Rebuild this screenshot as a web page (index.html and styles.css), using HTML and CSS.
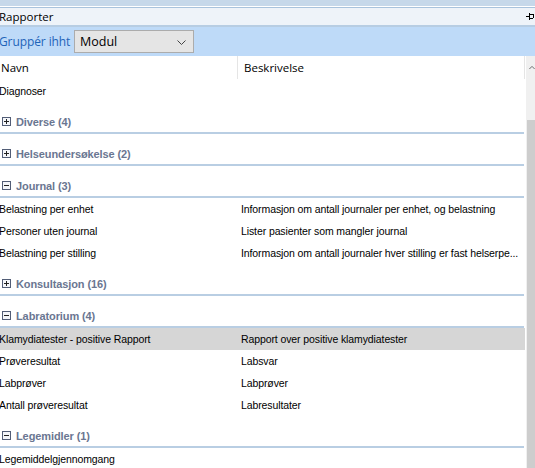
FILE: index.html
```html
<!DOCTYPE html>
<html>
<head>
<meta charset="utf-8">
<link rel="stylesheet" href="styles.css">
</head>
<body>
<div class="window">
  <div class="topstrip"></div>
  <div class="caption">
    <span class="caption-title">Rapporter</span>
    <svg class="pin" width="8" height="9" viewBox="0 0 8 9"><path d="M0 4.5h3M3 1v7M3 2h4M3 6h4M7 2v4" stroke="#000" stroke-width="1" fill="none" shape-rendering="crispEdges"/></svg>
  </div>
  <div class="toolbar">
    <span class="group-label">Gruppér ihht</span>
    <div class="combo">
      <span class="combo-text">Modul</span>
      <svg class="chevron" width="9" height="5" viewBox="0 0 9 5"><path d="M0.5 0.5l4 4 4-4" stroke="#444" stroke-width="1" fill="none"/></svg>
    </div>
  </div>
  <div class="grid">
    <div class="list">
      <div class="header">
        <div class="hcell first">Navn</div>
        <div class="hcell second">Beskrivelse</div>
      </div>
      <div class="row"><div class="c1">Diagnoser</div><div class="c2"></div></div>
      <div class="grp"><span class="box plus"></span><span class="gtext">Diverse (4)</span></div>
      <div class="grp"><span class="box plus"></span><span class="gtext">Helseundersøkelse (2)</span></div>
      <div class="grp"><span class="box minus"></span><span class="gtext">Journal (3)</span></div>
      <div class="row"><div class="c1">Belastning per enhet</div><div class="c2">Informasjon om antall journaler per enhet, og belastning</div></div>
      <div class="row"><div class="c1">Personer uten journal</div><div class="c2">Lister pasienter som mangler journal</div></div>
      <div class="row"><div class="c1">Belastning per stilling</div><div class="c2">Informasjon om antall journaler hver stilling er fast helserpe...</div></div>
      <div class="grp"><span class="box plus"></span><span class="gtext">Konsultasjon (16)</span></div>
      <div class="grp"><span class="box minus"></span><span class="gtext">Labratorium (4)</span></div>
      <div class="row selected"><div class="c1">Klamydiatester - positive Rapport</div><div class="c2">Rapport over positive klamydiatester</div></div>
      <div class="row"><div class="c1">Prøveresultat</div><div class="c2">Labsvar</div></div>
      <div class="row"><div class="c1">Labprøver</div><div class="c2">Labprøver</div></div>
      <div class="row"><div class="c1">Antall prøveresultat</div><div class="c2">Labresultater</div></div>
      <div class="grp"><span class="box minus"></span><span class="gtext">Legemidler (1)</span></div>
      <div class="row"><div class="c1">Legemiddelgjennomgang</div><div class="c2"></div></div>
    </div>
    <div class="scrollbar">
      <div class="arrow">
        <svg width="8" height="5" viewBox="0 0 8 5"><path d="M0.5 4.5l3.5-3.5 3.5 3.5" stroke="#606060" stroke-width="1.2" fill="none"/></svg>
      </div>
      <div class="thumb"></div>
    </div>
  </div>
</div>
</body>
</html>
```

FILE: styles.css
```css
html, body {
  margin: 0;
  padding: 0;
  background: #ffffff;
  overflow: hidden;
}

.window {
  width: 535px;
  height: 468px;
  display: flex;
  flex-direction: column;
  overflow: hidden;
}

.topstrip {
  height: 6px;
  background: #c6d8ea;
  border-bottom: 1px solid #ffffff;
}

.caption {
  height: 17px;
  background: #eef3f9;
  border-top: 1px solid #a9c3dd;
  border-bottom: 2px solid #b7cde3;
  display: flex;
  align-items: center;
  justify-content: space-between;
  font-family: "Open Sans", "Noto Sans", sans-serif;
  font-size: 11.5px;
  color: #000;
}

.caption-title {
  margin-left: -1px;
}

.pin {
  margin-right: 1px;
}

.toolbar {
  height: 29px;
  background: #bedaf8;
  display: flex;
  align-items: center;
  font-family: "Open Sans", "Noto Sans", sans-serif;
}

.group-label {
  color: #1e64b8;
  font-size: 12px;
  letter-spacing: -0.1px;
  margin-left: -1px;
  width: 75px;
  flex: none;
  white-space: nowrap;
}

.combo {
  height: 21px;
  background: #e5e5e5;
  border: 1px solid #acacac;
  display: flex;
  align-items: center;
  justify-content: space-between;
  padding: 0 7px 0 5px;
  box-sizing: content-box;
  width: 106px;
}

.combo-text {
  font-size: 12.5px;
  color: #000;
}

.chevron {
  margin-top: 1px;
}

.grid {
  flex: 1;
  display: flex;
  min-height: 0;
}

.list {
  width: 526px;
  font-family: "Liberation Sans", Arial, sans-serif;
  font-size: 10.5px;
  letter-spacing: -0.1px;
  color: #000;
}

.header {
  height: 24px;
  display: grid;
  grid-template-columns: 238px 287px;
  font-family: "Open Sans", "Noto Sans", sans-serif;
  font-size: 11.5px;
  letter-spacing: 0;
}

.hcell {
  display: flex;
  align-items: center;
  height: 23px;
  border-right: 1px solid #e5e5e5;
}

.hcell.first {
  padding-left: 1px;
}

.hcell.second {
  padding-left: 6px;
}

.row {
  height: 22px;
  display: grid;
  grid-template-columns: 241px 284px;
  align-items: center;
  width: 525px;
}

.row .c1 {
  margin-left: -1px;
  white-space: nowrap;
  overflow: hidden;
}

.row .c2 {
  white-space: nowrap;
}

.row.selected {
  background: #d6d6d6;
}

.grp {
  width: 524px;
  height: 32px;
  border-bottom: 2px solid #b9cee3;
  display: flex;
  align-items: center;
  padding-top: 9px;
  box-sizing: border-box;
}

.box {
  width: 7px;
  height: 7px;
  border: 1px solid #525d76;
  background: #f4f6fa;
  margin-left: 2px;
  margin-right: 5px;
  position: relative;
  flex: none;
}

.box::before {
  content: "";
  position: absolute;
  left: 1px;
  top: 3px;
  width: 5px;
  height: 1px;
  background: #222;
}

.box.plus::after {
  content: "";
  position: absolute;
  left: 3px;
  top: 1px;
  width: 1px;
  height: 5px;
  background: #222;
}

.gtext {
  font-weight: bold;
  color: #6a7691;
  font-size: 11px;
  letter-spacing: -0.1px;
}

.scrollbar {
  width: 9px;
  background: #f0f0f0;
  display: flex;
  flex-direction: column;
  border-left: 1px solid #ffffff;
}

.arrow {
  height: 22px;
  display: flex;
  align-items: center;
  padding-left: 3px;
}

.thumb {
  margin-top: 42px;
  flex: 1;
  background: #cdcdcd;
  margin-left: 1px;
}
```
